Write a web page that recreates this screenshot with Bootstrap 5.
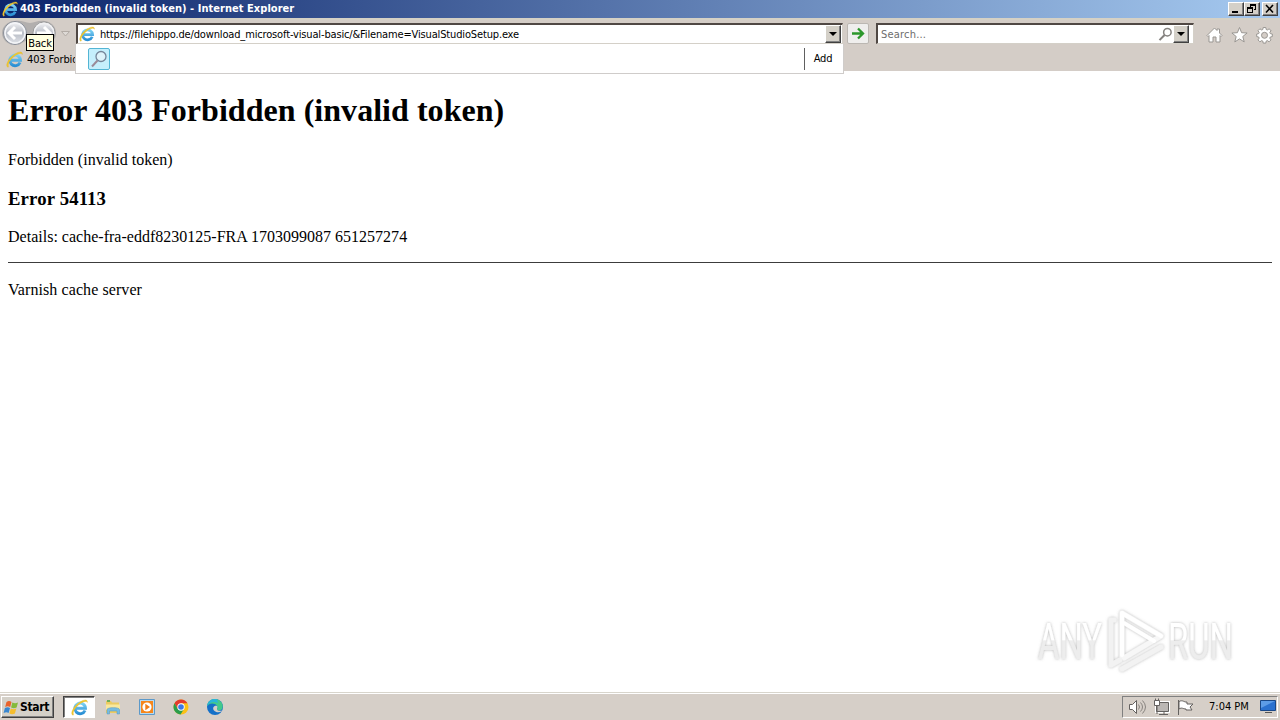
<!DOCTYPE html>
<html lang="en">
<head>
    <meta charset="UTF-8">
    <meta name="viewport" content="width=device-width, initial-scale=1.0">
    <title>403 Forbidden (invalid token)</title>
    <link rel="stylesheet" href="https://cdn.jsdelivr.net/npm/bootstrap@5.3.0/dist/css/bootstrap.min.css">
    <style>
        body {
            height: 720px;
            font-family: "DejaVu Sans Condensed", "DejaVu Sans", sans-serif;
            font-size: 11px;
            line-height: 14px;
            color: #000;
            background: #fff;
        }
        svg { display: block; flex: none; }
        .ui-text { white-space: nowrap; letter-spacing: -0.15px; }

        /* window frame */
        .titlebar { height: 18px; padding: 0 2px; background: linear-gradient(90deg, #0c256b, #a6caf0); }
        .titlebar .caption { margin-left: 2px; color: #fff; font-weight: 700; letter-spacing: 0.04px; }
        .raised {
            background: #d4d0c8;
            border: 1px solid;
            border-color: #fff #404040 #404040 #fff;
            box-shadow: inset -1px -1px #808080;
        }
        .win-btn { width: 16px; height: 14px; }
        .win-close { margin-left: 2px; }
        .chrome-bar { height: 53px; background: #d4cdc7; border-top: 2px solid #d5d1c5; }
        .nav-row { height: 28px; padding-top: 3px; }
        .nav-arrows { width: 76px; }
        .nav-arrows svg { margin-top: -3px; }
        .field { height: 21px; background: #fff; border: 1px solid #d4d0c8; border-top: 2px solid #504844; border-left: 2px solid #504844; }
        .address { width: 767px; padding-left: 1px; padding-right: 1px; }
        .address .url { margin-left: 5px; padding-top: 1px; }
        .drop { width: 16px; height: 18px; }
        .go { width: 22px; height: 21px; margin: 0 7px 0 4px; border: 1px solid #bbb7b2; border-radius: 2px; background: #efeeed; }
        .search { width: 318px; color: #6d6d6d; }
        .search .hint { margin-left: 3px; padding-top: 1px; letter-spacing: 0.2px; }
        .tools { margin-left: 12px; padding-top: 3px; gap: 8px; }
        .tab-row { height: 23px; padding-left: 6px; }
        .tab-row .tab-title { margin-left: 4px; padding-top: 1px; }
        .suggest { left: 75px; top: 44px; width: 769px; height: 30px; background: #fff; border: 1px solid #cfccca; border-top: 0; z-index: 3; }
        .suggest .provider { width: 22px; height: 22px; margin-left: 12px; border: 1px solid #53b5d4; border-radius: 2px; background: #c5effc; }
        .suggest .add { width: 39px; height: 22px; padding: 1px 2px 0 0; border-left: 1px solid #606060; }
        .tip { left: 26px; top: 34px; width: 28px; height: 17px; padding-top: 2px; background: #ffffe1; border: 1px solid #000; z-index: 4; }

        /* error document */
        .document { height: 621px; padding: 0 8px; font: 16px/18px "Liberation Serif", serif; }
        .document h1 { margin: 21px 0 22px; font-size: 32px; line-height: 37px; font-weight: 700; letter-spacing: 0.04px; }
        .document h3 { margin: 19px 0 19px; font-size: 18.72px; line-height: 21px; font-weight: 700; letter-spacing: 0.15px; }
        .document p { margin: 0; letter-spacing: 0.01px; }
        .document hr { margin: 16px 0 18px; border-top: 1px solid #3c3c3c; opacity: 1; }
        .document .server { letter-spacing: 0.08px; }
        .watermark { left: 1030px; top: 602px; }

        /* taskbar */
        .taskbar { height: 28px; padding: 1px 2px 0 1px; background: #d6cfc8; border-top: 1px solid #d8d5cc; box-shadow: inset 0 1px #fff; }
        .start { width: 53px; height: 22px; padding-left: 1px; font-weight: 700; font-size: 12px; }
        .start .ui-text { letter-spacing: -0.3px; }
        .task-active { width: 32px; height: 22px; margin-left: 9px; background: #fff; border: 1px solid; border-color: #404040 #fff #fff #404040; box-shadow: inset 1px 1px #808080; }
        .quick { margin-left: 9px; gap: 16px; }
        .tray { width: 156px; height: 22px; border: 1px solid; border-color: #808080 #fff #fff #808080; }
        .tray .clock { margin-left: 10px; letter-spacing: 0; }
    </style>
</head>
<body class="d-flex flex-column overflow-hidden position-relative">

<svg width="0" height="0" class="position-absolute">
    <defs>
        <linearGradient id="ieBlue" x1="0" y1="0" x2="0" y2="1">
            <stop offset="0" stop-color="#7ed2f5"/>
            <stop offset="1" stop-color="#2a8fd4"/>
        </linearGradient>
        <linearGradient id="orb" x1="0" y1="0" x2="0" y2="1">
            <stop offset="0" stop-color="#f6f6f8"/>
            <stop offset=".5" stop-color="#b9bdc6"/>
            <stop offset="1" stop-color="#e3e6eb"/>
        </linearGradient>
        <symbol id="ie" viewBox="0 0 16 16">
            <path d="M13.2 10.800A5 5 0 1 1 13.600 8.700H4.400" fill="none" stroke="url(#ieBlue)" stroke-width="2.800"/>
            <path d="M2 15.300C-1.300 14.500 2 7 8 3.100 12.400.2 15.800.1 15.400 3.300 14.700 1.500 11.800 2.400 8.800 4.200 4.300 7.300 1 12.600 2.500 14.400z" fill="#f3c92c" stroke="#dcb02e" stroke-width=".3"/>
        </symbol>
        <symbol id="lens" viewBox="0 0 16 16">
            <circle cx="10" cy="5.500" r="4" fill="none" stroke="currentColor" stroke-width="1.600"/>
            <path d="M7 8.500 1.600 14" stroke="currentColor" stroke-width="2.200"/>
        </symbol>
    </defs>
</svg>

<header class="titlebar d-flex align-items-center">
    <svg width="16" height="16"><use href="#ie"/></svg>
    <span class="caption ui-text">403 Forbidden (invalid token) - Internet Explorer</span>
    <div class="d-flex ms-auto">
        <div class="win-btn raised"><svg width="14" height="12"><path d="M3 9h6" stroke="#000" stroke-width="2"/></svg></div>
        <div class="win-btn raised"><svg width="14" height="12"><path d="M5 1.500h6M10.500 2v5M5.500 2v2M9 6.500h2M2 4.500h6M7.500 5v5M2.500 5v5M2 9.500h6M5 2.500h6M2 5.500h6" fill="none" stroke="#000"/></svg></div>
        <div class="win-btn win-close raised"><svg width="14" height="12"><path d="m3 2 7 7.500M10 2 3 9.500" stroke="#000" stroke-width="1.600"/></svg></div>
    </div>
</header>

<div class="chrome-bar">
    <div class="nav-row d-flex align-items-start">
        <div class="nav-arrows">
            <svg width="76" height="26">
                <path d="M15 1C22 0 25 3 30 3s8-3 15-2c6 1 11 5 11 12s-5 11-12 11c-6 0-9-4-14-4s-9 5-15 5C8 25 2 20 2 13S8 1 15 1z" fill="#b2afae"/>
                <circle cx="15" cy="13" r="11.500" fill="url(#orb)" stroke="#8b8f98"/>
                <circle cx="15" cy="13" r="10" fill="none" stroke="#f4f5f8" stroke-width="1.500"/>
                <circle cx="44" cy="13" r="11" fill="url(#orb)" stroke="#999"/>
                <circle cx="44" cy="13" r="9.700" fill="none" stroke="#f1f1f3" stroke-width="1.500"/>
                <path d="M22 13H9m6-6-6 6 6 6M37 13h13m-6-6 6 6-6 6" fill="none" stroke="#fff" stroke-width="3"/>
                <path d="M61.500 11.500h8l-4 4.500z" fill="#dedad6" stroke="#b3aca6"/>
            </svg>
        </div>
        <div class="address field d-flex align-items-center">
            <svg width="16" height="16"><use href="#ie"/></svg>
            <span class="url ui-text">https://filehippo.de/download_microsoft-visual-basic/&amp;Filename=VisualStudioSetup.exe</span>
            <div class="drop raised ms-auto"><svg width="14" height="16"><path d="M3 6h8l-4 4z"/></svg></div>
        </div>
        <div class="go"><svg width="20" height="19"><path d="M4 9.500h11M10 4.500l5 5-5 5" fill="none" stroke="#2c972b" stroke-width="2.300"/></svg></div>
        <div class="search field d-flex align-items-center">
            <span class="hint ui-text">Search...</span>
            <svg width="15" height="15" class="ms-auto" color="#85827f"><use href="#lens"/></svg>
            <div class="drop raised me-1"><svg width="14" height="16"><path d="M3 6h8l-4 4z"/></svg></div>
        </div>
        <div class="tools d-flex">
            <svg width="17" height="18"><path d="M1 9.500 8.500 2l2.500 2.500V3h2.500v4l2.500 2.500-1 1-1-1v6.500H10v-5H7v5H3V9.500l-1 1z" fill="#fff" stroke="#999692"/></svg>
            <svg width="17" height="18"><path d="m8.500 1.500 2.100 5.200 5.500.3-4.300 3.500 1.400 5.400-4.700-3-4.700 3 1.400-5.400L.900 7l5.500-.3z" fill="#fff" stroke="#999692"/></svg>
            <svg width="17" height="18" viewBox="0 0 17 18">
                <g fill="#fff" stroke="#999692">
                    <path d="m7.200 1.500h2.600l.4 2 1.100.5 1.800-1.200 1.900 1.900-1.200 1.800.5 1.100 2 .4v2.600l-2 .4-.5 1.100 1.200 1.800-1.900 1.900-1.800-1.200-1.100.5-.4 2H7.200l-.4-2-1.100-.5-1.800 1.200L2 13.900l1.200-1.800-.5-1.100-2-.4V8l2-.4.5-1.100L2 4.700l1.900-1.900L5.700 4l1.100-.5z"/>
                    <circle cx="8.500" cy="9.300" r="3" fill="#d4cdc7"/>
                </g>
            </svg>
        </div>
    </div>
    <div class="tab-row d-flex align-items-center">
        <svg width="17" height="17"><use href="#ie"/></svg>
        <span class="tab-title ui-text">403 Forbidden</span>
    </div>
</div>

<div class="suggest position-absolute d-flex align-items-center">
    <div class="provider"><svg width="20" height="20" viewBox="0 0 20 20">
        <circle cx="12" cy="7.500" r="5" fill="#def3fa" stroke="#76869a" stroke-width="1.300"/>
        <path d="m8.500 11.500-5.500 6" stroke="#9a8b98" stroke-width="2"/>
    </svg></div>
    <div class="add ms-auto d-flex align-items-center justify-content-center"><span class="ui-text">Add</span></div>
</div>
<div class="tip position-absolute d-flex align-items-center justify-content-center"><span class="ui-text">Back</span></div>

<main class="document overflow-hidden">
    <h1>Error 403 Forbidden (invalid token)</h1>
    <p>Forbidden (invalid token)</p>
    <h3>Error 54113</h3>
    <p>Details: cache-fra-eddf8230125-FRA 1703099087 651257274</p>
    <hr>
    <p class="server">Varnish cache server</p>
</main>

<svg class="watermark position-absolute" width="240" height="86">
    <defs>
        <linearGradient id="fade" x1="0" y1="0" x2="0" y2="76" gradientUnits="userSpaceOnUse">
            <stop offset=".5" stop-color="#fff"/>
            <stop offset=".51" stop-color="#ededed"/>
        </linearGradient>
        <filter id="halo" x="-10%" y="-10%" width="120%" height="120%">
            <feDropShadow dx="0" dy="0" stdDeviation="1.500" flood-color="#777" flood-opacity=".55"/>
        </filter>
    </defs>
    <g filter="url(#halo)" fill="url(#fade)" font-family="Roboto, sans-serif" font-size="50">
        <text x="8" y="57" textLength="64" lengthAdjust="spacingAndGlyphs">ANY</text>
        <text x="138" y="57" textLength="65" lengthAdjust="spacingAndGlyphs">RUN</text>
        <g fill="none" stroke-linejoin="round" stroke-linecap="round">
            <path d="M92 55V11l39 23-37 22" stroke="#f7f7f7" stroke-width="5"/>
            <path d="M84 18h-3v45l9-5M92 67l39-22" stroke="#f2f2f2" stroke-width="5"/>
            <path d="M92 53V11l39 23M94 21l30 18" stroke="#fff" stroke-width="4"/>
        </g>
    </g>
</svg>

<footer class="taskbar d-flex align-items-center">
    <div class="start raised d-flex align-items-center">
        <svg width="17" height="17" viewBox="0 0 17 17">
            <path d="M3.500 3C5.500 1.600 7 2 8.500 3L7.200 8C5.500 7 4 7 2.200 8z" fill="#e9622b"/>
            <path d="M9.300 3.400c2 1 3.500 1 5.700 0l-1.400 5c-2 1-3.700 1-5.500 0z" fill="#85ba3b"/>
            <path d="M1.900 9c2-1 3.500-1 5.100 0l-1.400 5c-1.500-1-3-1-5 0z" fill="#3886d0"/>
            <path d="M7.800 9.400c2 1 3.500 1 5.500 0l-1.400 5c-2 1-3.700 1-5.500 0z" fill="#f5bd2d"/>
        </svg>
        <span class="ui-text">Start</span>
    </div>
    <div class="task-active d-flex align-items-center justify-content-center"><svg width="17" height="17"><use href="#ie"/></svg></div>
    <div class="quick d-flex align-items-center">
        <svg width="18" height="18" viewBox="0 0 18 18">
            <path d="M2 3h5l1 1.500h7V15H2z" fill="#eccb62"/>
            <path d="M3 2h3v2H3z" fill="#6cae5a"/>
            <path d="M2 6.500h14V12H2z" fill="#f9e89d"/>
            <path d="M3 16v-4.500C3 9 15.500 9 15.500 11.500V16H13v-3H5.500v3z" fill="#76bce1" stroke="#5595be" stroke-width=".5"/>
        </svg>
        <svg width="18" height="18" viewBox="0 0 18 18">
            <path d="M1.500 1.500h15v15h-15z" fill="#b8daf0" stroke="#5c99c9"/>
            <path d="M3 3h12v12H3z" fill="#f6861b"/>
            <circle cx="9" cy="9" r="4.600" fill="#fff"/>
            <path d="m7.300 5.800 4.700 3.200-4.700 3.200z" fill="#f07d18"/>
        </svg>
        <svg width="18" height="18" viewBox="0 0 18 18">
            <circle cx="9" cy="9" r="7.500" fill="#fbc116"/>
            <path d="M2.500 5.200A7.500 7.500 0 0 1 15.500 5.300H9L5.800 11z" fill="#e33b2e"/>
            <path d="M2.500 5.200A7.500 7.500 0 0 0 8.500 16.500L12 11H5.800z" fill="#2a9d4c"/>
            <circle cx="9" cy="9" r="3.700" fill="#fff"/>
            <circle cx="9" cy="9" r="2.800" fill="#3b78e7"/>
        </svg>
        <svg width="18" height="18" viewBox="0 0 18 18">
            <circle cx="9" cy="9" r="8" fill="#1470c8"/>
            <path d="M1 8C2 2 7 0 11 1.300 16 3 18 8 16 11c-1.500 2-5 1.500-5 .5s1-2 0-3.500C9 4.500 3 5 1 8z" fill="#43c98b"/>
            <path d="M1 8C2 2 7 0 11 1.300L12 5C7 2.500 3 5 1 8z" fill="#28b5d9"/>
            <path d="M11 8c-3-1-5 2-3 4.500 2 2 5 2.500 8 .5 1-1-5 1-5-2 0-1 1-2 0-3z" fill="#d6cfc8"/>
        </svg>
    </div>
    <div class="tray ms-auto d-flex align-items-center">
        <svg width="76" height="20" fill="none" stroke="#64615f">
            <path d="M6.500 7.500h3l4-4v13l-4-4h-3z" fill="#fff"/>
            <path d="M15.500 7.500q2 2.500 0 5M17.500 5.500q4 4.500 0 9M19.500 3.500q6 6.500 0 13" stroke="#88837f"/>
            <path d="M33.500 5.500h12v9h-12z" fill="#bbb7b4" stroke="#fff" stroke-width="3"/>
            <path d="M33.500 5.500h12v9h-12z" fill="#bbb7b4"/>
            <path d="M31.500 3.500h5v5h-5z" fill="#fff"/>
            <path d="M34 9v8M36 17.500h9M41 15v2M32.500 1.500v2m3-2v2"/>
            <path d="M55.500 3v15M56 4.500c4-2 5 1 8 .5v2h6l-3 3 2 3h-6v-1c-3 0-4-2-7 0z" fill="#fff"/>
        </svg>
        <span class="clock ui-text">7:04 PM</span>
        <svg width="17" height="16" viewBox="0 0 17 16" class="ms-auto">
            <path d="M.500 1.500h15v10H.500z" fill="#2b71cf" stroke="#194787"/>
            <path d="M1 2h14L1 9z" fill="#5d9ce7"/>
            <path d="M5 13.500h7" stroke="#555"/>
        </svg>
    </div>
</footer>

<script src="https://cdn.jsdelivr.net/npm/bootstrap@5.3.0/dist/js/bootstrap.bundle.min.js"></script>
</body>
</html>
